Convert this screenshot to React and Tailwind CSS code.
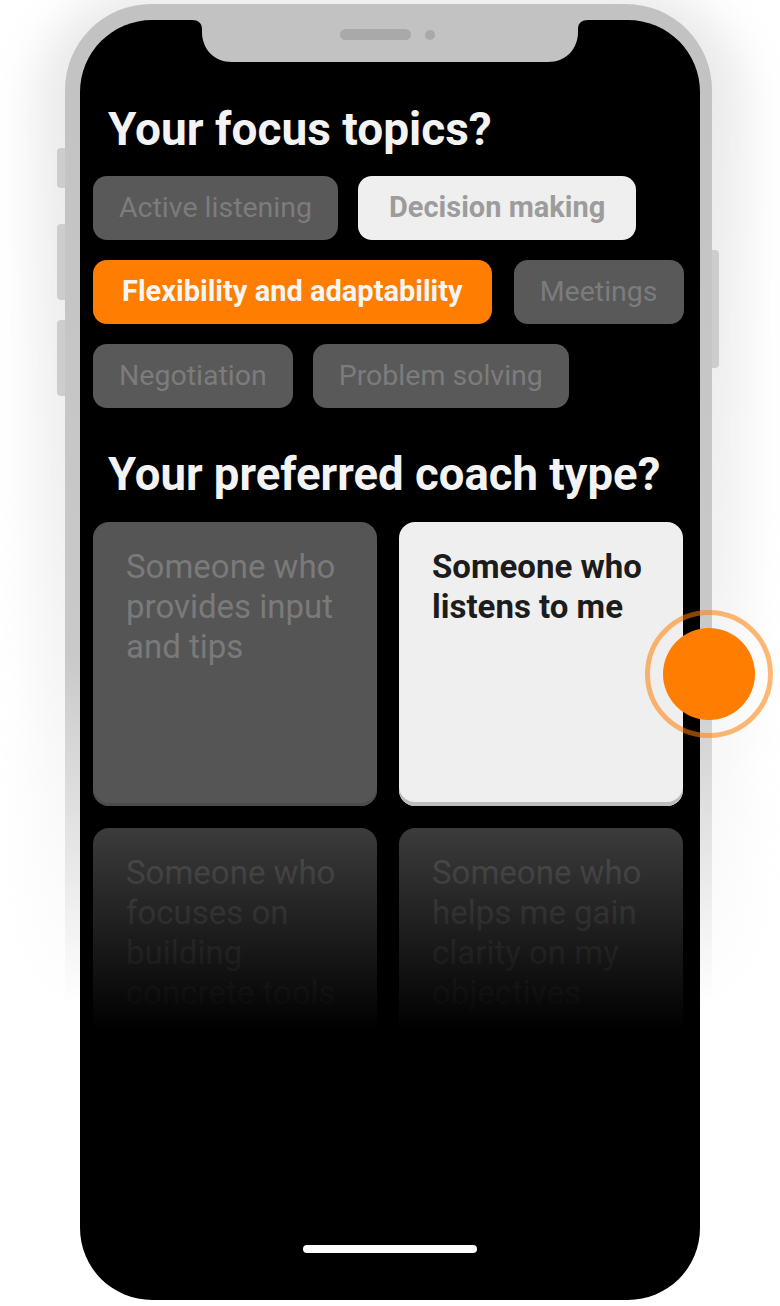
const topicRows = [
  [
    { label: "Active listening" },
    { label: "Decision making", kind: "light" },
  ],
  [
    { label: "Flexibility and adaptability", kind: "active" },
    { label: "Meetings" },
  ],
  [{ label: "Negotiation" }, { label: "Problem solving" }],
];

function Chip({ label, kind }) {
  if (kind === "active") {
    return (
      <div className="h-16 shrink-0 whitespace-nowrap flex items-center px-[29px] rounded-[14px] bg-[#ff7d00] text-[#f6f6f6] text-[29px] font-bold">
        {label}
      </div>
    );
  }
  if (kind === "light") {
    return (
      <div className="h-16 shrink-0 whitespace-nowrap flex items-center px-[31px] rounded-[14px] bg-[#efefef] text-[#9c9c9c] text-[29px] font-bold">
        {label}
      </div>
    );
  }
  return (
    <div className="h-16 shrink-0 whitespace-nowrap flex items-center px-[26px] rounded-[14px] bg-[#595959] text-[#7c7c7c] text-[28.5px]">
      {label}
    </div>
  );
}

function Card({ children, selected }) {
  return (
    <div
      className={
        selected
          ? "h-[284px] rounded-[16px] pl-[33px] pr-4 pt-[25px] text-[33px] leading-10 font-bold bg-[#efefef] text-[#1c1c1c] shadow-[inset_0_-4px_0_#bdbdbd]"
          : "h-[284px] rounded-[16px] pl-[33px] pr-4 pt-[25px] text-[33px] leading-10 bg-[#555555] text-[#7a7a7a] shadow-[inset_0_-3px_0_#4b4b4b]"
      }
    >
      {children}
    </div>
  );
}

function Notch() {
  return (
    <svg className="absolute top-0 left-0" width="620" height="44" viewBox="0 0 620 44">
      <path
        d="M112 0 C118 0 122 3 122 9 V12 C122 29 134 42 152 42 H468 C486 42 498 29 498 12 V9 C498 3 502 0 508 0 Z"
        fill="#c2c2c2"
      />
      <rect x="260" y="9" width="71" height="11" rx="5.5" fill="#a9a9a9" />
      <circle cx="350" cy="15" r="5" fill="#a9a9a9" />
    </svg>
  );
}

export default function App() {
  return (
    <div className="relative w-[780px] h-[1306px] overflow-hidden bg-white font-['Roboto',sans-serif]">
      {/* soft halo behind the device */}
      <div className="absolute left-[35px] top-[-10px] w-[710px] h-[1040px] rounded-[110px] bg-gradient-to-b from-[#e9e9e9] via-[#f0f0f0] to-transparent blur-[22px]" />

      <div className="relative ml-[65px] mt-[4px] w-[647px] h-[1302px]">
        {/* side buttons */}
        <div className="absolute left-[-8px] top-[144px] w-[9px] h-[40px] rounded-l-[4px] bg-[#cdcdcd]" />
        <div className="absolute left-[-8px] top-[220px] w-[9px] h-[76px] rounded-l-[4px] bg-[#cdcdcd]" />
        <div className="absolute left-[-8px] top-[316px] w-[9px] h-[76px] rounded-l-[4px] bg-[#cdcdcd]" />
        <div className="absolute right-[-7px] top-[246px] w-[8px] h-[118px] rounded-r-[4px] bg-[#cdcdcd]" />

        <div className="relative h-full rounded-[86px] pl-[15px] pr-[12px] pt-[16px] bg-[linear-gradient(180deg,#c2c2c2_0%,#c9c9c9_50%,#e6e6e6_65%,#ffffff_77%)]">
          <div className="relative w-[620px] h-[1280px] rounded-[72px] bg-black overflow-hidden pl-[13px] pr-[17px] pt-[83px]">
            <Notch />

            <h1 className="ml-[15px] text-[46px] leading-[52px] font-bold text-[#f3f3f3]">
              Your focus topics?
            </h1>

            <div className="mt-[21px] flex flex-col gap-5">
              {topicRows.map((row, i) => (
                <div key={i} className={i === 1 ? "flex gap-[22px]" : "flex gap-5"}>
                  {row.map((t) => (
                    <Chip key={t.label} {...t} />
                  ))}
                </div>
              ))}
            </div>

            <h2 className="mt-[41px] ml-[15px] text-[45.5px] leading-[52px] font-bold text-[#f3f3f3]">
              Your preferred coach type?
            </h2>

            <div className="mt-[21px] grid grid-cols-2 gap-[22px]">
              <Card>Someone who provides input and tips</Card>
              <Card selected>Someone who listens to me</Card>
            </div>

            <div className="relative mt-[22px] grid grid-cols-2 gap-[22px]">
              <Card>Someone who focuses on building concrete tools</Card>
              <Card>Someone who helps me gain clarity on my objectives</Card>
              <div className="absolute inset-x-0 top-0 h-[290px] bg-[linear-gradient(180deg,rgba(0,0,0,0.3)_0%,#000000_70%)]" />
            </div>

            <div className="absolute bottom-[47px] left-1/2 -translate-x-1/2 w-[174px] h-2 rounded-full bg-white" />
          </div>
        </div>
      </div>

      {/* touch indicator */}
      <div className="absolute left-[645px] top-[610px] w-[128px] h-[128px] rounded-full border-[5px] border-[rgba(255,125,0,0.55)] flex items-center justify-center">
        <div className="w-[92px] h-[92px] rounded-full bg-[#ff7d00]" />
      </div>
    </div>
  );
}
